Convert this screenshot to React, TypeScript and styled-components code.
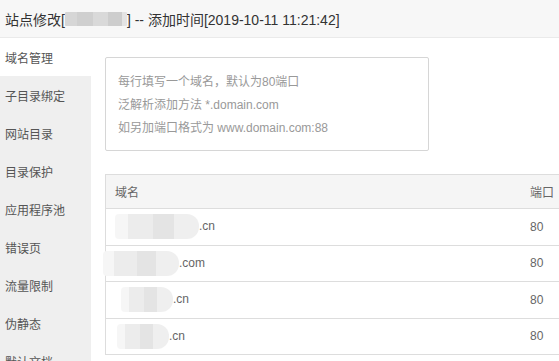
import styled, { createGlobalStyle } from 'styled-components';

const GlobalStyle = createGlobalStyle`
  html, body {
    margin: 0;
    padding: 0;
    background: #fff;
    overflow: hidden;
  }
  body {
    font-family: "Liberation Sans", "Noto Sans CJK SC", sans-serif;
    color: #333;
  }
`;

const menu = [
  '域名管理',
  '子目录绑定',
  '网站目录',
  '目录保护',
  '应用程序池',
  '错误页',
  '流量限制',
  '伪静态',
  '默认文档',
];

const tips = [
  '每行填写一个域名，默认为80端口',
  '泛解析添加方法 *.domain.com',
  '如另加端口格式为 www.domain.com:88',
];

type Domain = { suffix: string; blur: number; offset: number };

const domains: Domain[] = [
  { suffix: '.cn', blur: 84, offset: 0 },
  { suffix: '.com', blur: 76, offset: -12 },
  { suffix: '.cn', blur: 52, offset: 6 },
  { suffix: '.cn', blur: 52, offset: 2 },
];

export default function App() {
  return (
    <>
      <GlobalStyle />
      <Page>
        <Header>
          站点修改[
          <Mosaic $w={62} $h={14} $tone="dark" />
          ] -- 添加时间[2019-10-11 11:21:42]
        </Header>
        <Body>
          <Sidebar>
            {menu.map((item, i) => (
              <MenuItem key={item} $active={i === 0}>
                {item}
              </MenuItem>
            ))}
          </Sidebar>
          <Content>
            <TipBox>
              {tips.map((t) => (
                <Tip key={t}>{t}</Tip>
              ))}
            </TipBox>
            <Table>
              <thead>
                <tr>
                  <Th>域名</Th>
                  <Th $port>端口</Th>
                </tr>
              </thead>
              <tbody>
                {domains.map((d, i) => (
                  <tr key={i}>
                    <Td>
                      <DomainCell>
                        <Mosaic $w={d.blur} $h={25} $tone="light" style={{ marginLeft: d.offset }} />
                        {d.suffix}
                      </DomainCell>
                    </Td>
                    <Td $port>80</Td>
                  </tr>
                ))}
              </tbody>
            </Table>
          </Content>
        </Body>
      </Page>
    </>
  );
}

const Page = styled.div`
  width: 559px;
  height: 361px;
  display: flex;
  flex-direction: column;
  overflow: hidden;
`;

const Header = styled.div`
  height: 37px;
  flex-shrink: 0;
  display: flex;
  align-items: center;
  padding-left: 5px;
  background: #f7f7f7;
  border-bottom: 1px solid #eaeaea;
  font-size: 14px;
  color: #333;
  white-space: nowrap;
`;

const Mosaic = styled.span<{ $w: number; $h: number; $tone: 'dark' | 'light' }>`
  display: inline-block;
  flex-shrink: 0;
  width: ${(p) => p.$w}px;
  height: ${(p) => p.$h}px;
  border-radius: ${(p) => (p.$tone === 'light' ? '4px 12px 12px 4px' : '1px')};
  background: ${(p) =>
    p.$tone === 'dark'
      ? 'linear-gradient(90deg, #d6d6d6 0 20%, #cfcfcf 20% 45%, #d9d9d9 45% 70%, #cdcdcd 70% 92%, #e4e4e4 92%)'
      : 'linear-gradient(90deg, #f6f6f6 0 15%, #ececec 15% 45%, #e4e4e4 45% 70%, #efefef 70%)'};
  filter: blur(0.6px);
`;

const Body = styled.div`
  flex: 1;
  display: flex;
  min-height: 0;
`;

const Sidebar = styled.div`
  width: 91px;
  flex-shrink: 0;
  background: #efefef;
`;

const MenuItem = styled.div<{ $active?: boolean }>`
  height: 38px;
  display: flex;
  align-items: center;
  padding-left: 5px;
  font-size: 12px;
  color: #555;
  background: ${(p) => (p.$active ? '#fff' : 'transparent')};
  white-space: nowrap;
`;

const Content = styled.div`
  flex: 1;
  padding: 19px 0 0 14px;
  display: flex;
  flex-direction: column;
  gap: 23px;
  min-width: 0;
`;

const TipBox = styled.div`
  width: 298px;
  padding: 13px 12px 10px;
  border: 1px solid #d6d6d6;
  border-radius: 2px;
`;

const Tip = styled.div`
  font-size: 12px;
  line-height: 23px;
  color: #999;
  white-space: nowrap;
`;

const Table = styled.table`
  width: 480px;
  border-collapse: collapse;
  border: 1px solid #ddd;
  font-size: 12px;
  color: #666;

  thead tr {
    background: #f5f5f5;
  }
  tbody tr {
    border-top: 1px solid #ddd;
  }
`;

const Th = styled.th<{ $port?: boolean }>`
  height: 33px;
  padding: 0 0 0 ${(p) => (p.$port ? '10px' : '9px')};
  width: ${(p) => (p.$port ? '54px' : 'auto')};
  text-align: left;
  font-weight: normal;
  color: #666;
`;

const Td = styled.td<{ $port?: boolean }>`
  height: 35.5px;
  padding: 0 0 0 ${(p) => (p.$port ? '10px' : '9px')};
  white-space: nowrap;
  vertical-align: middle;
`;

const DomainCell = styled.div`
  display: flex;
  align-items: center;
  height: 25px;
  line-height: 25px;
`;
